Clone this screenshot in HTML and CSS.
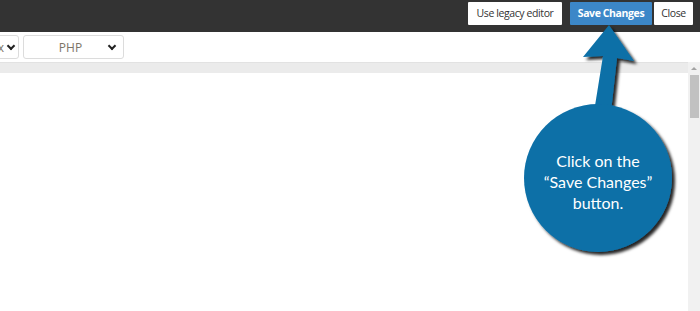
FILE: index.html
```html
<!DOCTYPE html>
<html>
<head>
<meta charset="utf-8">
<link rel="stylesheet" href="styles.css">
</head>
<body>
<div class="topbar">
  <button class="btn btn-light btn-legacy">Use legacy editor</button>
  <button class="btn btn-primary">Save Changes</button>
  <button class="btn btn-light btn-close">Close</button>
</div>
<div class="toolbar">
  <div class="select select-cut"><span class="sel-text">x</span><span class="chev"></span></div>
  <div class="select select-lang"><span class="sel-text">PHP</span><span class="chev"></span></div>
</div>
<div class="editor">
  <div class="editor-main">
    <div class="gutter-band"></div>
    <div class="code-area"></div>
  </div>
  <div class="scrollbar">
    <div class="scroll-up"></div>
    <div class="scroll-thumb"></div>
  </div>
</div>
<svg class="callout" width="700" height="311" viewBox="0 0 700 311">
  <defs>
    <filter id="sh" x="-20%" y="-20%" width="140%" height="140%">
      <feDropShadow dx="3" dy="3" stdDeviation="1.8" flood-color="#000" flood-opacity="0.85"/>
    </filter>
  </defs>
  <g filter="url(#sh)" fill="#0a6fa7">
    <polygon points="609,25 634,61 617,58 611,112 594,112 603,56 583,57"/>
    <circle cx="598" cy="178" r="74"/>
  </g>
  <text class="callout-text" x="598" y="167" text-anchor="middle">Click on the</text>
  <text class="callout-text" x="598" y="188" text-anchor="middle">“Save Changes”</text>
  <text class="callout-text" x="598" y="209" text-anchor="middle">button.</text>
</svg>
</body>
</html>
```
FILE: styles.css
```css
html, body {
  margin: 0;
  padding: 0;
  width: 700px;
  height: 311px;
  overflow: hidden;
  background: #ffffff;
  font-family: "Open Sans", "DejaVu Sans", sans-serif;
}
.topbar {
  height: 32px;
  background: #333333;
  display: flex;
  justify-content: flex-end;
  align-items: flex-start;
  padding: 2px 7px 0 0;
  box-sizing: border-box;
}
.btn {
  height: 23px;
  border: none;
  border-radius: 1px;
  font-family: "Open Sans", sans-serif;
  font-size: 10.5px;
  letter-spacing: -0.4px;
  padding: 0;
  line-height: 23px;
  white-space: nowrap;
}
.btn-light {
  background: #ffffff;
  color: #333333;
}
.btn-legacy {
  width: 94px;
  margin-right: 8px;
}
.btn-primary {
  width: 82px;
  background: #3c87c8;
  color: #ffffff;
  font-weight: 700;
  margin-right: 2px;
}
.btn-close {
  width: 39px;
}
.toolbar {
  height: 30px;
  display: flex;
  align-items: flex-start;
  padding-top: 3px;
  box-sizing: border-box;
  gap: 4px;
}
.select {
  height: 24px;
  box-sizing: border-box;
  border: 1px solid #dcdcdc;
  border-radius: 3px;
  display: flex;
  align-items: center;
  position: relative;
  font-size: 12px;
  color: #7d7466;
}
.select-cut {
  width: 60px;
  margin-left: -41px;
  justify-content: flex-end;
  padding-right: 4px;
}
.select-cut .sel-text {
  margin-right: 4px;
}
.select-lang {
  width: 101px;
  justify-content: center;
}
.select-lang .sel-text {
  margin-left: -6px;
}
.chev {
  width: 4px;
  height: 4px;
  border-right: 2px solid #222;
  border-bottom: 2px solid #222;
  transform: rotate(45deg);
  margin-top: -3px;
}
.select-lang .chev {
  position: absolute;
  right: 8px;
  top: 7px;
  margin: 0;
}
.editor {
  display: flex;
  height: 249px;
}
.editor-main {
  flex: 1;
  display: flex;
  flex-direction: column;
}
.gutter-band {
  height: 10px;
  background: #ebebeb;
  border-top: 1px solid #e2e2e2;
}
.code-area {
  flex: 1;
  background: #ffffff;
}
.scrollbar {
  width: 12px;
  background: #f1f1f1;
  display: flex;
  flex-direction: column;
  align-items: center;
}
.scroll-up {
  width: 0;
  height: 0;
  border-left: 3px solid transparent;
  border-right: 3px solid transparent;
  border-bottom: 3px solid #a3a3a3;
  margin-top: 5px;
}
.scroll-thumb {
  width: 9px;
  height: 43px;
  background: #c1c1c1;
  margin-top: 5px;
}
.callout {
  position: absolute;
  left: 0;
  top: 0;
  pointer-events: none;
}
.callout-text {
  fill: #ffffff;
  font-family: "Lato", "Open Sans", sans-serif;
  font-size: 16px;
}
```
